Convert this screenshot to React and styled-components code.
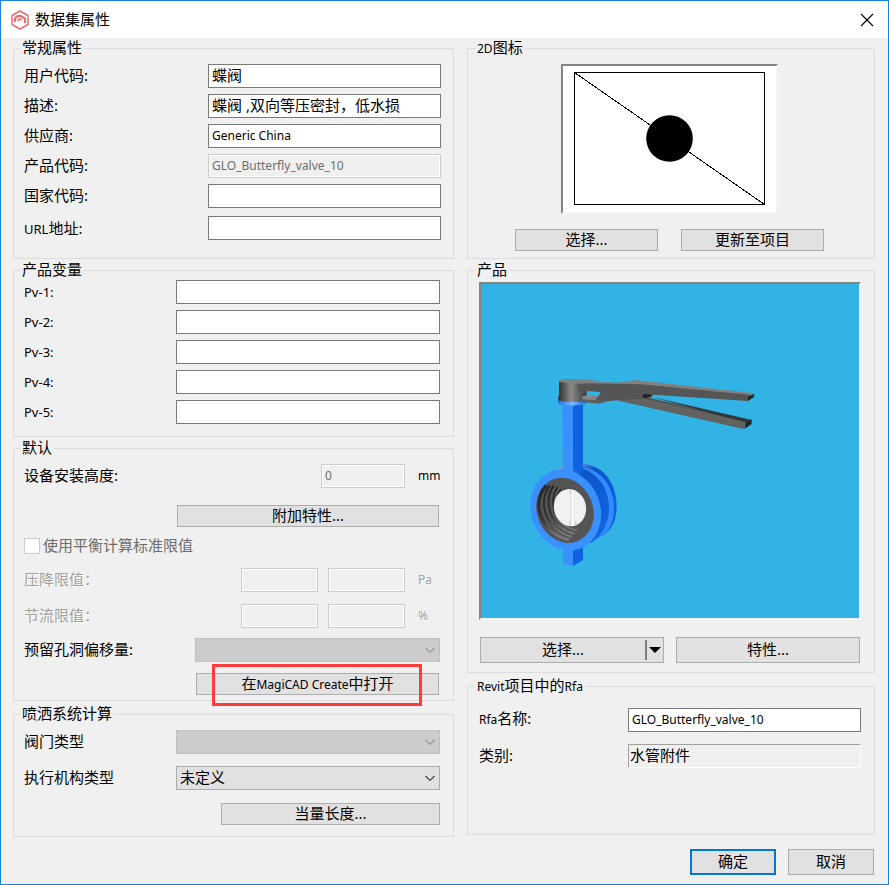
import React, { useId } from "react";
import styled, { createGlobalStyle, css } from "styled-components";

const GlobalStyle = createGlobalStyle`
  * { box-sizing: border-box; }
  body {
    margin: 0;
    background: #f0f0f0;
  }
  body, button, input, select {
    font-family: "Noto Sans", "Noto Sans CJK SC", sans-serif;
    font-size: 15px;
    line-height: 20px;
    color: #000;
  }
`;

const Window = styled.div`
  display: flex;
  flex-direction: column;
  min-height: 100vh;
  border: 1px solid #1883d7;
  background: #f0f0f0;
`;

const TitleBar = styled.header`
  display: flex;
  align-items: center;
  gap: 6px;
  height: 37px;
  padding: 0 14px 0 10px;
  background: #fff;
`;

const Title = styled.h1`
  flex: 1;
  margin: 0;
  padding-bottom: 2px;
  font-size: 15px;
  font-weight: 400;
`;

const CloseButton = styled.button`
  display: flex;
  padding: 0;
  border: 0;
  background: none;
`;

const Columns = styled.main`
  display: grid;
  grid-template-columns: 441fr 408fr;
  gap: 13px;
  padding: 0 13px 0 12px;
`;

const Column = styled.div`
  display: flex;
  flex-direction: column;
  gap: 1px;
  min-width: 0;
`;

const Group = styled.fieldset`
  min-width: 0;
  margin: ${(p) => (p.$spaced ? "2px 0 0" : "0")};
  padding: ${(p) => p.$pad};
  border: 1px solid #dcdcdc;
`;

const Legend = styled.legend`
  height: 20px;
  margin-left: -4px;
  padding: 0 2px;
  line-height: 18px;
  white-space: nowrap;
`;

const Latin = styled.span`
  font-size: 12px;
`;

const Rows = styled.div`
  display: flex;
  flex-direction: column;
  gap: ${(p) => p.$gap}px;
`;

const Row = styled.div`
  display: grid;
  grid-template-columns: ${(p) => p.$cols};
  align-items: center;
  column-gap: 10px;
  padding-top: ${(p) => p.$top || 0}px;
`;

const dimmed = css`
  color: #a0a0a0;
  text-shadow: 1px 1px 0 #fff;
`;

const Label = styled.label`
  white-space: nowrap;
  padding-bottom: ${(p) => (p.$latin ? 0 : 2)}px;
  font-size: ${(p) => (p.$latin ? 13 : 15)}px;
  ${(p) => p.$dim && dimmed}
`;

const Unit = styled.span`
  padding-left: 3px;
  font-size: 12px;
  ${(p) => p.$dim && dimmed}
`;

const TextBox = styled.input`
  width: 100%;
  min-width: 0;
  height: 24px;
  padding: ${(p) => (p.$latin ? "0 3px 2px" : "0 3px 4px")};
  border: 1px solid #7a7a7a;
  border-radius: 0;
  background: #fff;
  font-size: ${(p) => (p.$latin ? 12 : 15)}px;
  &:disabled {
    border-color: #ccc;
    background: #f0f0f0;
    box-shadow: inset 0 0 0 1px #fff;
    color: #6d6d6d;
  }
`;

const SunkenBox = styled(TextBox)`
  padding: 0 1px 4px;
  border-color: #a0a0a0 #fff #fff #a0a0a0;
  background: #f0f0f0;
`;

const Button = styled.button`
  display: block;
  width: 100%;
  height: ${(p) => (p.$tall ? 26 : 22)}px;
  padding: 0 0 2px;
  border: 1px solid #adadad;
  background: #e1e1e1;
  line-height: 18px;
  white-space: nowrap;
  ${(p) =>
    p.$primary &&
    css`
      border: 2px solid #0078d7;
    `}
`;

const Indent = styled.div`
  position: relative;
  padding-right: ${(p) => p.$right || 0}px;
  margin-left: ${(p) => p.$left}px;
  margin-top: ${(p) => p.$top || 0}px;
`;

const Highlight = styled.div`
  position: absolute;
  top: -9px;
  left: 16px;
  right: 18px;
  height: 42px;
  border: 3px solid #ff3b3b;
  pointer-events: none;
`;

const CheckLabel = styled.label`
  display: flex;
  align-items: center;
  gap: 3px;
  height: 20px;
  margin-top: 9px;
  color: #6d6d6d;
  line-height: 18px;
`;

const CheckText = styled.span`
  padding-bottom: 2px;
`;

const CheckBox = styled.input`
  appearance: none;
  width: 16px;
  height: 16px;
  margin: 0;
  border: 1px solid #ccc;
  background: #fff;
`;

const SelectWrap = styled.div`
  display: grid;
  grid-template-columns: 1fr 20px;
  align-items: center;
  color: #444;
  > select {
    grid-area: 1 / 1 / 2 / 3;
  }
  > svg {
    grid-area: 1 / 2 / 2 / 3;
    justify-self: center;
    pointer-events: none;
  }
`;

const Select = styled.select`
  appearance: none;
  width: 100%;
  height: 24px;
  padding: 0 3px 2px;
  border: 1px solid #adadad;
  border-radius: 0;
  background: #e1e1e1;
  &:disabled {
    border-color: #bfbfbf;
    background: #ccc;
    opacity: 1;
  }
  &:disabled + svg {
    color: #9a9a9a;
  }
`;

const Preview = styled.div`
  display: flex;
  width: ${(p) => p.$width};
  margin: ${(p) => p.$margin};
  border: 2px solid;
  border-color: #848484 #f4f4f4 #f4f4f4 #848484;
  background: ${(p) => p.$fill};
  > svg {
    display: block;
    width: 100%;
    height: auto;
  }
`;

const ButtonPair = styled.div`
  display: grid;
  grid-template-columns: 1fr 1fr;
  gap: ${(p) => p.$gap}px;
  padding: 0 ${(p) => p.$side}px;
`;

const SplitButton = styled.div`
  display: grid;
  grid-template-columns: 1fr 18px;
  height: 26px;
  border: 1px solid #adadad;
  background: #e1e1e1;
`;

const SplitPart = styled.button`
  display: flex;
  align-items: center;
  justify-content: center;
  padding: ${(p) => (p.$menu ? "0" : "0 0 2px")};
  margin: ${(p) => (p.$menu ? "2px 0" : "0")};
  border: 0;
  border-left: ${(p) => (p.$menu ? "2px solid #808080" : "0")};
  background: none;
`;

const Footer = styled.footer`
  display: grid;
  grid-template-columns: 86px 86px;
  justify-content: end;
  gap: 12px;
  padding: 12px 14px 9px;
`;

function Logo() {
  return (
    <svg width="18" height="20" viewBox="0 0 18 20" fill="none" stroke="#ee6a6e" aria-hidden="true">
      <path d="M9 1 17 5.5V14.5L9 19 1 14.5V5.5Z" strokeWidth="1.5" strokeLinejoin="round" />
      <path d="M4 12V9.6C4.400 6 9 4.600 11.400 7L14 8.600V13" strokeWidth="2.200" />
      <path d="M7 11.200C7 8.800 9.400 8.400 10.600 10.200" strokeWidth="1.600" />
    </svg>
  );
}

function Chevron() {
  return (
    <svg width="12" height="8" viewBox="0 0 12 8" fill="none" stroke="currentColor" aria-hidden="true">
      <path d="M1.5 2 6 6.5 10.5 2" strokeWidth="1.2" />
    </svg>
  );
}

function Symbol2D() {
  return (
    <svg viewBox="0 0 213 146" role="img" aria-label="2D">
      <g shapeRendering="crispEdges" fill="none" stroke="#000">
        <rect x="11.5" y="6.5" width="190" height="132" />
        <path d="M11.5 6.5 201.5 138.5" />
      </g>
      <circle cx="106.5" cy="72.5" r="23.3" />
    </svg>
  );
}

function Valve() {
  return (
    <svg viewBox="0 0 378 334" role="img" aria-label="Butterfly valve">
      <defs>
        <linearGradient id="cap">
          <stop offset="0" stopColor="#2c2c2c" />
          <stop offset=".45" stopColor="#8a8a8a" />
          <stop offset="1" stopColor="#3c3c3c" />
        </linearGradient>
        <linearGradient id="collar">
          <stop offset="0" stopColor="#1468ea" />
          <stop offset=".5" stopColor="#7dbaff" />
          <stop offset="1" stopColor="#1468ea" />
        </linearGradient>
        <linearGradient id="rim" x1="0" y1="0" x2="1" y2="1">
          <stop offset="0" stopColor="#8aaede" />
          <stop offset=".3" stopColor="#0b55c8" />
          <stop offset="1" stopColor="#1168e8" />
        </linearGradient>
        <linearGradient id="bore" x1="0" y1="0" x2=".3" y2="1">
          <stop offset="0" stopColor="#242424" />
          <stop offset=".6" stopColor="#333" />
          <stop offset="1" stopColor="#777" />
        </linearGradient>
        <linearGradient id="stem">
          <stop offset="0" stopColor="#bdbdbd" />
          <stop offset=".5" stopColor="#fff" />
          <stop offset="1" stopColor="#bdbdbd" />
        </linearGradient>
      </defs>
      <g transform="translate(38 76) scale(.3333)">
        <path d="M132 560V611L162 618V560Z" fill="#3a90ff" />
        <path d="M162 560V618L192 600V560Z" fill="#0f63e0" />
        <path d="M195 312C255 318 293 370 293 438 293 480 280 508 257 522L215 548 150 345Z" fill="url(#rim)" />
        <path d="M190 322C250 330 286 385 285 448 284 488 270 510 257 520L220 545 150 345Z" fill="#338cff" />
        <path d="M112 329 135 318 190 325C245 345 270 395 270 445 269 492 250 525 217 548L130 520Z" fill="url(#rim)" />
        <path d="M129 135H162V335H133Z" fill="#3a90ff" />
        <path d="M162 135H192V333L180 338 162 330Z" fill="#0f63e0" />
        <ellipse cx="140" cy="450" rx="104" ry="124" fill="#3a90ff" transform="rotate(-20 140 450)" />
        <ellipse cx="138" cy="451" rx="84" ry="100" fill="#545454" transform="rotate(-22 138 451)" />
        <g fill="none" stroke="url(#bore)" strokeWidth="6">
          <path d="M82 377C36 425 62 515 150 540" strokeWidth="9" />
          <path d="M93 376C53 425 80 510 160 531" />
          <path d="M104 377C69 425 95 505 168 521" />
          <path d="M116 381C84 425 110 500 175 511" strokeWidth="5" />
          <path d="M126 387C98 420 112 480 140 498" strokeWidth="4" />
        </g>
        <ellipse cx="153" cy="443" rx="48" ry="56" fill="#f1f1f1" transform="rotate(-12 153 443)" />
        <path d="M150 391H170L167 405V476L174 496H149L154 476V405Z" fill="url(#stem)" />
        <path d="M117 120H201V130Q190 136 160 137 128 136 117 130Z" fill="url(#collar)" />
        <path d="M175 110 246 106 300 108 265 124 241 131 190 126H175Z" fill="#5d5d5d" />
        <path d="M120 62H203V107L188 110V122Q150 130 118 121V108H120Z" fill="url(#cap)" />
        <path d="M175 66 290 68 372 72 698 102 686 123 405 104 382 111 680 180 672 206 295 121 265 124 236 121 244 96 175 92Z" fill="#555" />
        <path d="M120 62 130 57 205 58 255 67 295 68 350 60 707 100 698 105 370 73 290 71 205 70 175 71 120 66Z" fill="#808080" />
        <path d="M204 94 244 97 237 108 205 106Z" fill="#32b3e6" />
        <path d="M192 108 237 108 228 121 190 118Z" fill="#858585" />
        <path d="M369 108 376 102 400 104 397 111 376 115Z" fill="#222" />
        <path d="M397 110 698 180V184L680 188Z" fill="#353535" />
        <path d="M376 116 680 186 674 206 295 121Z" fill="#626262" />
        <path d="M686 111 707 101 704 112 687 123ZM680 188 697 178 698 192 676 207Z" fill="#252525" />
      </g>
    </svg>
  );
}

function Field({ label, cols, top, latinLabel, box: Box = TextBox, latin, ...rest }) {
  const id = useId();
  return (
    <Row $cols={cols} $top={top}>
      <Label htmlFor={id} $latin={latinLabel}>{label}</Label>
      <Box id={id} $latin={latin} {...rest} />
    </Row>
  );
}

function SelectField({ label, cols, top, value = "", disabled }) {
  const id = useId();
  return (
    <Row $cols={cols} $top={top}>
      <Label htmlFor={id}>{label}</Label>
      <SelectWrap>
        <Select id={id} disabled={disabled} defaultValue={value}>
          <option value={value}>{value}</option>
        </Select>
        <Chevron />
      </SelectWrap>
    </Row>
  );
}

function LimitField({ label, unit }) {
  const id = useId();
  return (
    <Row $cols="1fr 77px 77px 25px" $top={12}>
      <Label htmlFor={id} $dim>{label}</Label>
      <TextBox id={id} disabled />
      <TextBox aria-label={label} disabled />
      <Unit $dim>{unit}</Unit>
    </Row>
  );
}

const VARIABLES = ["Pv-1:", "Pv-2:", "Pv-3:", "Pv-4:", "Pv-5:"];

function GeneralGroup() {
  const cols = "174px 1fr";
  return (
    <Group $pad="6px 12px 18px 10px">
      <Legend>常规属性</Legend>
      <Rows $gap={6}>
        <Field cols={cols} label="用户代码:" defaultValue="蝶阀" />
        <Field cols={cols} label="描述:" defaultValue="蝶阀 ,双向等压密封，低水损" />
        <Field cols={cols} label="供应商:" defaultValue="Generic China" latin />
        <Field cols={cols} label="产品代码:" defaultValue="GLO_Butterfly_valve_10" latin disabled />
        <Field cols={cols} label="国家代码:" />
        <Field cols={cols} top={2} latinLabel label={<>URL<Cjk>地址:</Cjk></>} />
      </Rows>
    </Group>
  );
}

const Cjk = styled.span`
  font-size: 15px;
`;

function VariablesGroup() {
  return (
    <Group $pad="0 13px 12px 10px">
      <Legend>产品变量</Legend>
      <Rows $gap={6}>
        {VARIABLES.map((name) => (
          <Field key={name} cols="142px 1fr" label={name} latinLabel />
        ))}
      </Rows>
    </Group>
  );
}

function DefaultsGroup() {
  const id = useId();
  return (
    <Group $pad="6px 13px 5px 10px">
      <Legend>默认</Legend>
      <Row $cols="1fr 84px 25px">
        <Label htmlFor={id}>设备安装高度:</Label>
        <TextBox id={id} defaultValue="0" $latin disabled />
        <Unit>mm</Unit>
      </Row>
      <Indent $left={153} $right={1} $top={17}>
        <Button type="button">附加特性...</Button>
      </Indent>
      <CheckLabel>
        <CheckBox type="checkbox" disabled />
        <CheckText>使用平衡计算标准限值</CheckText>
      </CheckLabel>
      <LimitField label="压降限值：" unit="Pa" />
      <LimitField label="节流限值：" unit="%" />
      <SelectField cols="161px 1fr" top={10} label="预留孔洞偏移量:" disabled />
      <Indent $left={172} $right={1} $top={11}>
        <Button type="button">在<Latin>MagiCAD Create</Latin>中打开</Button>
        <Highlight />
      </Indent>
    </Group>
  );
}

function SprinklerGroup() {
  return (
    <Group $spaced $pad="6px 13px 11px 10px">
      <Legend>喷洒系统计算</Legend>
      <SelectField cols="142px 1fr" label="阀门类型" disabled />
      <SelectField cols="142px 1fr" top={12} label="执行机构类型" value="未定义" />
      <Indent $left={197} $top={13}>
        <Button type="button">当量长度...</Button>
      </Indent>
    </Group>
  );
}

function SymbolGroup() {
  return (
    <Group $pad="6px 14px 7px 11px">
      <Legend><Latin>2D</Latin>图标</Legend>
      <Preview $width="217px" $margin="0 auto 15px" $fill="#fff">
        <Symbol2D />
      </Preview>
      <ButtonPair $gap={23} $side={36}>
        <Button type="button">选择...</Button>
        <Button type="button">更新至项目</Button>
      </ButtonPair>
    </Group>
  );
}

function ProductGroup() {
  return (
    <Group $pad="2px 13px 9px 11px">
      <Legend>产品</Legend>
      <Preview $width="100%" $margin="0 0 17px" $fill="#32b3e6">
        <Valve />
      </Preview>
      <ButtonPair $gap={12} $side={1}>
        <SplitButton>
          <SplitPart type="button">选择...</SplitPart>
          <SplitPart type="button" $menu aria-label="选择">
            <svg width="12" height="6" viewBox="0 0 12 6" aria-hidden="true">
              <path d="M0 0H12L6 6Z" />
            </svg>
          </SplitPart>
        </SplitButton>
        <Button type="button" $tall>特性...</Button>
      </ButtonPair>
    </Group>
  );
}

function RfaGroup() {
  return (
    <Group $spaced $pad="12px 13px 66px 11px">
      <Legend><Latin>Revit</Latin>项目中的<Latin>Rfa</Latin></Legend>
      <Rows $gap={12}>
        <Field cols="139px 1fr" label={<><Latin>Rfa</Latin>名称:</>} defaultValue="GLO_Butterfly_valve_10" latin />
        <Field cols="139px 1fr" label="类别:" box={SunkenBox} defaultValue="水管附件" readOnly />
      </Rows>
    </Group>
  );
}

export default function App() {
  return (
    <>
      <GlobalStyle />
      <Window>
        <TitleBar>
          <Logo />
          <Title>数据集属性</Title>
          <CloseButton type="button" aria-label="关闭">
            <svg width="14" height="14" viewBox="0 0 14 14" stroke="#000" aria-hidden="true">
              <path d="M1 1 13 13M13 1 1 13" strokeWidth="1.1" />
            </svg>
          </CloseButton>
        </TitleBar>
        <Columns>
          <Column>
            <GeneralGroup />
            <VariablesGroup />
            <DefaultsGroup />
            <SprinklerGroup />
          </Column>
          <Column>
            <SymbolGroup />
            <ProductGroup />
            <RfaGroup />
          </Column>
        </Columns>
        <Footer>
          <Button type="button" $tall $primary>确定</Button>
          <Button type="button" $tall>取消</Button>
        </Footer>
      </Window>
    </>
  );
}
